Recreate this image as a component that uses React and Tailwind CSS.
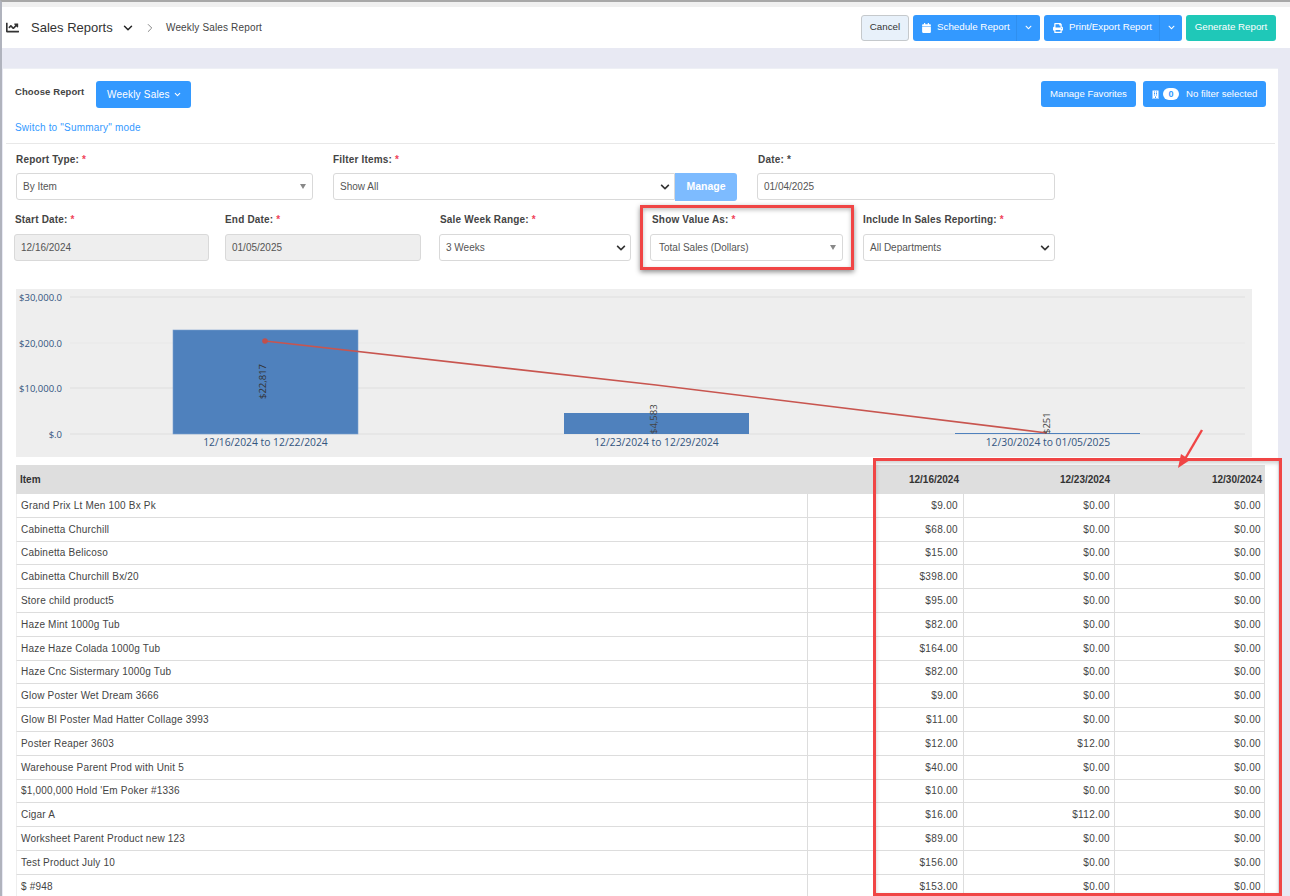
import React from "react";
import { FaChartLine, FaCalendar, FaPrint, FaBuilding, FaChevronDown } from "react-icons/fa";
import { ChevronDown, ChevronRight } from "lucide-react";

const rows = [
  ["Grand Prix Lt Men 100 Bx Pk", "$9.00", "$0.00", "$0.00"],
  ["Cabinetta Churchill", "$68.00", "$0.00", "$0.00"],
  ["Cabinetta Belicoso", "$15.00", "$0.00", "$0.00"],
  ["Cabinetta Churchill Bx/20", "$398.00", "$0.00", "$0.00"],
  ["Store child product5", "$95.00", "$0.00", "$0.00"],
  ["Haze Mint 1000g Tub", "$82.00", "$0.00", "$0.00"],
  ["Haze Haze Colada 1000g Tub", "$164.00", "$0.00", "$0.00"],
  ["Haze Cnc Sistermary 1000g Tub", "$82.00", "$0.00", "$0.00"],
  ["Glow Poster Wet Dream 3666", "$9.00", "$0.00", "$0.00"],
  ["Glow Bl Poster Mad Hatter Collage 3993", "$11.00", "$0.00", "$0.00"],
  ["Poster Reaper 3603", "$12.00", "$12.00", "$0.00"],
  ["Warehouse Parent Prod with Unit 5", "$40.00", "$0.00", "$0.00"],
  ["$1,000,000 Hold 'Em Poker #1336", "$10.00", "$0.00", "$0.00"],
  ["Cigar A", "$16.00", "$112.00", "$0.00"],
  ["Worksheet Parent Product new 123", "$89.00", "$0.00", "$0.00"],
  ["Test Product July 10", "$156.00", "$0.00", "$0.00"],
  ["$ #948", "$153.00", "$0.00", "$0.00"],
];

function Label({ children }) {
  return (
    <div className="h-[14px] text-[10px] leading-[14px] font-bold tracking-[0.18px] text-[#444] whitespace-nowrap">
      {children}: <span className="text-[#f0435a]">*</span>
    </div>
  );
}

function Box({ children, icon, bg = "bg-white", className = "" }) {
  return (
    <div className={`h-[27px] ${bg} border border-[#d9d9d9] rounded-[3px] flex items-center justify-between pl-[6px] pr-[4px] text-[10px] text-[#555] ${className}`}>
      <span>{children}</span>
      {icon === "caret" && <span className="mr-[2px] w-0 h-0 border-x-[3.5px] border-x-transparent border-t-[5px] border-t-[#888]" />}
      {icon === "chev" && <FaChevronDown className="text-[#333] w-[10px] h-[10px]" />}
    </div>
  );
}

function Chart() {
  const grid = [[297, "$30,000.0"], [343, "$20,000.0"], [388, "$10,000.0"], [434, "$.0"]];
  return (
    <svg width="1236" height="168" viewBox="16 289 1236 168" className="block bg-[#eeeeee]" style={{ fontFamily: '"Open Sans", sans-serif' }}>
      {grid.map(([y, l]) => (
        <g key={y}>
          <line x1="70" x2="1245" y1={y} y2={y} stroke={y === 343 ? "#e8e8e8" : "#dedede"} strokeWidth="1" />
          <text x="62" y={y + 3.5} textAnchor="end" fontSize="9.5" fill="#33557f">{l}</text>
        </g>
      ))}
      <rect x="173" y="330" width="185" height="104" fill="#4f81bd" stroke="#7ba0d0" strokeWidth="0.6" />
      <rect x="564" y="413" width="185" height="21" fill="#4f81bd" />
      <rect x="955" y="433" width="185" height="1" fill="#4f81bd" />
      <polyline points="265,341 656,385 1047,433" fill="none" stroke="#c8554f" strokeWidth="1.7" />
      <circle cx="265" cy="341" r="2.8" fill="#c0504d" />
      <text transform="translate(266,399) rotate(-90)" fontSize="9.5" fill="#333">$22,817</text>
      <text transform="translate(657,434) rotate(-90)" fontSize="9.5" fill="#444">$4,583</text>
      <text transform="translate(1050,434) rotate(-90)" fontSize="9.5" fill="#444">$251</text>
      <text x="265.5" y="445.5" textAnchor="middle" fontSize="10.3" fill="#33557f">12/16/2024 to 12/22/2024</text>
      <text x="656.5" y="445.5" textAnchor="middle" fontSize="10.3" fill="#33557f">12/23/2024 to 12/29/2024</text>
      <text x="1048" y="445.5" textAnchor="middle" fontSize="10.3" fill="#33557f">12/30/2024 to 01/05/2025</text>
    </svg>
  );
}

export default function App() {
  return (
    <div className="relative w-[1290px] h-[896px] overflow-hidden bg-[#e8e9f3] border-t-[2px] border-t-[#a8a8a8] border-l-[2px] border-l-[#b0b3bd] text-[#333]" style={{ fontFamily: '"Liberation Sans", Arial, sans-serif' }}>
      {/* top bar */}
      <div className="h-[5px] bg-[#f0f0f0]" />
      <header className="h-[41px] bg-white flex items-center pl-[4px] pr-[14px]">
        <FaChartLine className="w-[13px] h-[13px] text-[#333]" />
        <span className="ml-[12px] w-[81px] whitespace-nowrap text-[13px] text-[#333]">Sales Reports</span>
        <ChevronDown className="ml-[9px] w-[14px] h-[14px] text-[#222]" strokeWidth={2.5} />
        <ChevronRight className="ml-[8px] w-[14px] h-[14px] text-[#777]" strokeWidth={1.5} />
        <span className="ml-[9px] text-[10px] tracking-[0.15px] text-[#444]">Weekly Sales Report</span>
        <div className="ml-auto flex items-center gap-[4px] text-[9.75px]">
          <button className="w-[48px] h-[26px] bg-[#e8f1fa] border border-[#c5c9cc] rounded-[3px] text-[#333]">Cancel</button>
          <div className="w-[127px] h-[26px] bg-[#3399ff] rounded-[3px] text-white flex items-center">
            <FaCalendar className="ml-[9px] w-[9px] h-[10px]" />
            <span className="ml-[6px]">Schedule Report</span>
            <span className="ml-auto w-[24px] h-full flex items-center justify-center border-l border-l-[#2f8fef]">
              <FaChevronDown className="w-[7px] h-[7px]" />
            </span>
          </div>
          <div className="w-[138px] h-[26px] bg-[#3399ff] rounded-[3px] text-white flex items-center">
            <FaPrint className="ml-[9px] w-[10px] h-[10px]" />
            <span className="ml-[6px]">Print/Export Report</span>
            <span className="ml-auto w-[23px] h-full flex items-center justify-center border-l border-l-[#2f8fef]">
              <FaChevronDown className="w-[7px] h-[7px]" />
            </span>
          </div>
          <button className="w-[90px] h-[26px] bg-[#1fc8b8] rounded-[3px] text-white">Generate Report</button>
        </div>
      </header>

      {/* card */}
      <main className="mt-[20px] ml-[1px] w-[1275px] h-[900px] bg-white border-t border-t-[#eef0f5] px-[12px]">
        <div className="flex items-start pt-[12px] h-[75px] border-b border-b-[#e8e8e8] -mx-[9px] px-[9px]">
          <div>
            <div className="flex items-start">
              <span className="w-[81px] mt-[4px] text-[9.5px] leading-[14px] font-bold tracking-[0.1px] text-[#444]">Choose Report</span>
              <div className="w-[95px] h-[27px] bg-[#3399ff] rounded-[3px] text-white text-[10px] flex items-center pl-[11px] gap-[3px] tracking-[0.2px]">
                Weekly Sales <ChevronDown className="w-[9px] h-[9px]" strokeWidth={3} />
              </div>
            </div>
            <div className="mt-[14px] text-[10px] leading-[12px] text-[#3399ff] tracking-[0.2px]">Switch to "Summary" mode</div>
          </div>
          <div className="ml-auto flex gap-[7px] text-[9.6px] text-white">
            <div className="w-[95px] h-[26px] bg-[#3399ff] rounded-[3px] flex items-center justify-center">Manage Favorites</div>
            <div className="w-[123px] h-[26px] bg-[#3399ff] rounded-[3px] flex items-center">
              <FaBuilding className="ml-[9px] w-[7px] h-[9px]" />
              <span className="ml-[4px] w-[16px] h-[12px] bg-white rounded-full text-[#3399ff] text-[9px] font-bold leading-[12px] text-center">0</span>
              <span className="ml-[7px]">No filter selected</span>
            </div>
          </div>
        </div>

        {/* form row 1 */}
        <div className="flex mt-[9px]">
          <div className="ml-[1px] w-[297px]">
            <Label>Report Type</Label>
            <div className="h-[6px]" />
            <Box icon="caret">By Item</Box>
          </div>
          <div className="ml-[20px]">
            <Label>Filter Items</Label>
            <div className="h-[6px]" />
            <div className="flex">
              <Box icon="chev" className="w-[342px] rounded-r-none">Show All</Box>
              <div className="w-[62px] h-[28px] bg-[#7dbbff] rounded-r-[3px] text-white text-[10.5px] font-bold flex items-center justify-center">Manage</div>
            </div>
          </div>
          <div className="ml-[20px] w-[298px]">
            <div className="ml-[1px] h-[14px] text-[10px] leading-[14px] font-bold tracking-[0.2px] text-[#444]">Date: <span>*</span></div>
            <div className="h-[6px]" />
            <Box>01/04/2025</Box>
          </div>
        </div>

        {/* form row 2 */}
        <div className="flex mt-[12px] -ml-[1px]">
          <div className="w-[195px]">
            <div className="ml-[1px]"><Label>Start Date</Label></div>
            <div className="h-[7px]" />
            <Box bg="bg-[#eeeeee]">12/16/2024</Box>
          </div>
          <div className="ml-[16px] w-[196px]">
            <Label>End Date</Label>
            <div className="h-[7px]" />
            <Box bg="bg-[#eeeeee]">01/05/2025</Box>
          </div>
          <div className="ml-[18px] w-[192px]">
            <div className="ml-[1px]"><Label>Sale Week Range</Label></div>
            <div className="h-[7px]" />
            <Box icon="chev">3 Weeks</Box>
          </div>
          <div className="ml-[19px] w-[193px]">
            <div className="ml-[2px]"><Label>Show Value As</Label></div>
            <div className="h-[7px]" />
            <Box icon="caret" className="h-[26px] !pl-[8px]">Total Sales (Dollars)</Box>
          </div>
          <div className="ml-[20px] w-[192px]">
            <Label>Include In Sales Reporting</Label>
            <div className="h-[7px]" />
            <Box icon="chev">All Departments</Box>
          </div>
        </div>

        {/* chart */}
        <div className="mt-[28px] ml-[1px]"><Chart /></div>

        {/* table */}
        <div className="mt-[8px] ml-[1px] w-[1249px] text-[10px] tracking-[0.2px] text-[#444]">
          <div className="h-[29px] bg-[#dedede] flex items-center font-bold tracking-normal text-[#333]">
            <div className="w-[791px] pl-[4px]">Item</div>
            <div className="w-[156px] pr-[4px] text-right">12/16/2024</div>
            <div className="w-[151px] pr-[4px] text-right">12/23/2024</div>
            <div className="w-[151px] pr-[3px] text-right">12/30/2024</div>
          </div>
          {rows.map((r) => (
            <div key={r[0]} className="h-[23.8px] flex border-b border-b-[#dddddd] border-r border-r-[#dddddd] border-l border-l-[#eeeeee]">
              <div className="w-[791px] pl-[4px] flex items-center border-r border-r-[#dddddd]">{r[0]}</div>
              <div className="w-[156px] pr-[5px] flex items-center justify-end border-r border-r-[#dddddd] tracking-[0.35px]">{r[1]}</div>
              <div className="w-[151px] pr-[4px] flex items-center justify-end border-r border-r-[#dddddd] tracking-[0.35px]">{r[2]}</div>
              <div className="w-[149px] pr-[3px] flex items-center justify-end tracking-[0.35px]">{r[3]}</div>
            </div>
          ))}
        </div>
      </main>

      {/* annotations */}
      <div className="absolute left-[638px] top-[203px] w-[214px] h-[65px] border-[3px] border-[#f04545] shadow-[0_2px_5px_rgba(0,0,0,0.45),inset_0_2px_4px_rgba(0,0,0,0.25)]" />
      <div className="absolute left-[871px] top-[456px] w-[409px] h-[438px] border-[3px] border-[#f04545] shadow-[inset_0_2px_4px_rgba(0,0,0,0.2)]" />
      <svg className="absolute left-[1170px] top-[425px]" width="40" height="48" viewBox="0 0 40 48">
        <path d="M30 3 L13 32" stroke="#f04545" strokeWidth="2.4" fill="none" />
        <path d="M6 41 L9 27 L18 33 Z" fill="#f04545" />
      </svg>
    </div>
  );
}
